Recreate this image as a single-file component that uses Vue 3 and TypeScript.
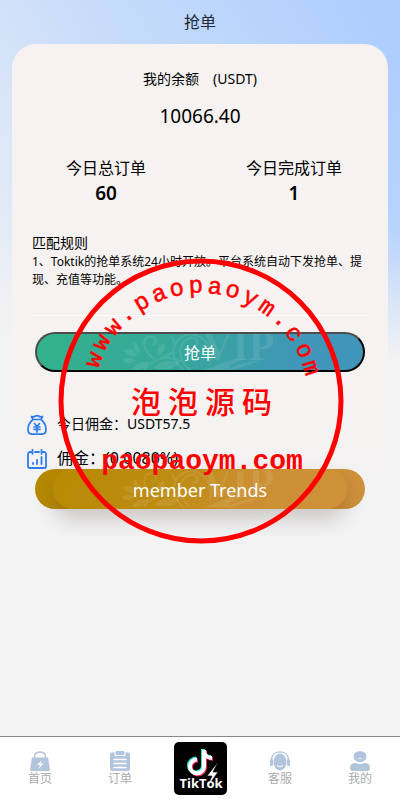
<script setup lang="ts">
interface Stat {
  label: string
  value: number
}

interface Tab {
  label: string
  icon: 'bag' | 'list' | 'logo' | 'service' | 'user'
}

const stats: Stat[] = [
  { label: '今日总订单', value: 60 },
  { label: '今日完成订单', value: 1 },
]

const tabs: Tab[] = [
  { label: '首页', icon: 'bag' },
  { label: '订单', icon: 'list' },
  { label: 'TikTok', icon: 'logo' },
  { label: '客服', icon: 'service' },
  { label: '我的', icon: 'user' },
]

// Letters of the seal stand evenly on an arc around the seal's centre.
const sealText = 'www.paopaoym.com'
const centre = 143
const radius = 108
const advance = 14
const letters = sealText.split('').map((_, i) => {
  const deg = -69 + (i * 142) / (sealText.length - 1)
  const a = (deg * Math.PI) / 180
  return {
    x: Math.round(centre + radius * Math.sin(a) - (advance / 2) * Math.cos(a)),
    y: Math.round(centre - radius * Math.cos(a) - (advance / 2) * Math.sin(a)),
    deg: Math.round(deg),
  }
})
const sealX = letters.map((l) => l.x).join(' ')
const sealY = letters.map((l) => l.y).join(' ')
const sealRotate = letters.map((l) => l.deg).join(' ')
</script>

<template>
  <div class="page">
    <svg class="defs" aria-hidden="true">
      <symbol id="ornament" viewBox="0 0 180 36">
        <g fill="none" stroke="currentColor" stroke-width="2" stroke-linecap="round">
          <path d="M24 36C32 26 46 20 60 27M34 25C26 19 20 8 28 3c7-3 11 5 5 8M40 24C53 22 59 12 52 3M63 36C48 22 52 5 68 0M70 36C56 24 58 8 70 4c8-2 10 7 4 8M68 0C84 0 94 14 90 28" />
        </g>
        <g fill="currentColor">
          <path d="M3 16c8-2 12 1 14 6-6 1-11-1-14-6zM14 8c5 3 7 8 5 12-4-2-6-7-5-12zM1 26c6-3 11-3 15 0-5 4-11 4-15 0zM12 36c3-6 9-9 17-8-2 6-9 9-17 8zM34 34c6-7 15-9 25-5-5 6-14 8-25 5zM38 21c-2-6 1-10 6-12 2 5 0 10-6 12z" />
          <path d="M84 36c14-4 22-12 44-11-12 2-17 5-20 10 10-5 20-7 32-9-13 6-23 9-30 10z" />
        </g>
        <text x="82" y="26" font-family="Liberation Serif, serif" font-size="42" font-weight="700" fill="currentColor">VIP</text>
      </symbol>
    </svg>

    <header class="title">抢单</header>

    <main class="card">
      <div class="balance-label"><span>我的余额</span><span>(USDT)</span></div>
      <div class="balance">10066.40</div>

      <section class="stats">
        <div v-for="s in stats" :key="s.label" class="stat">
          <span>{{ s.label }}</span>
          <strong>{{ s.value }}</strong>
        </div>
      </section>

      <section class="rules">
        <h2>匹配规则</h2>
        <p>1、Toktik的抢单系统24小时开放。平台系统自动下发抢单、提现、充值等功能。</p>
      </section>

      <button class="pill grab" type="button">
        <svg class="ornament" aria-hidden="true"><use href="#ornament" /></svg>
        <span class="caption">抢单</span>
      </button>

      <div class="info first">
        <svg class="info-icon" viewBox="0 0 20 20" fill="none" stroke="#2b7cf0" stroke-width="1.700" stroke-linejoin="round" stroke-linecap="round" aria-hidden="true">
          <path d="M6 4.500L4.500 1.500c2 .8 3 .3 4-.7h3c1 1 2 1.500 4 .7L14 4.500zM6 4.500C3 7 1 11 1 14.500 1 18 3 19.200 5.500 19.200h9c2.500 0 4.500-1.200 4.500-4.700C19 11 17 7 14 4.500" />
          <path d="M7.500 8.500L10 11.500l2.500-3M7 12h6M7 14.300h6M10 11.500V17" />
        </svg>
        <span class="info-text">今日佣金：USDT57.5</span>
      </div>
      <div class="info large">
        <svg class="info-icon" viewBox="0 0 20 20" fill="none" stroke="#2b7cf0" stroke-width="1.800" stroke-linejoin="round" stroke-linecap="round" aria-hidden="true">
          <path d="M4 3H3a2 2 0 0 0-2 2v12a2 2 0 0 0 2 2h14a2 2 0 0 0 2-2V5a2 2 0 0 0-2-2h-1M5.500.8v4M14.500.8v4M8 3h4M6 14v1M10 11v4M14.500 8v7" />
        </svg>
        <span class="info-text">佣金：(0.0080%)</span>
      </div>

      <button class="pill trends" type="button">
        <span class="plate"></span>
        <svg class="ornament" aria-hidden="true"><use href="#ornament" /></svg>
        <span class="caption">member Trends</span>
      </button>
    </main>

    <nav class="tabs">
      <a v-for="t in tabs" :key="t.label" href="#" class="tab" :aria-label="t.label">
        <svg v-if="t.icon === 'logo'" class="logo" viewBox="0 0 53 53" aria-hidden="true">
          <rect width="53" height="53" rx="5" fill="#000" />
          <g fill="none" stroke-width="4">
            <path d="M31 7v16.500a7 7 0 1 1-7-7M31 7c0 5 3 8 8 8" stroke="#2ee6e0" transform="translate(-2 0)" />
            <path d="M31 7v16.500a7 7 0 1 1-7-7M31 7c0 5 3 8 8 8" stroke="#f5265a" transform="translate(0 2)" />
            <path d="M31 7v16.500a7 7 0 1 1-7-7M31 7c0 5 3 8 8 8" stroke="#fff" transform="translate(-1 1)" />
          </g>
          <path d="M44 20L33 34h5l-6 13 12-17h-5z" fill="#fff" stroke="#000" stroke-width=".6" />
          <text x="27" y="46" text-anchor="middle" class="brand">TikTok</text>
        </svg>
        <template v-else>
          <svg class="tab-icon" viewBox="0 0 20 20" aria-hidden="true">
            <template v-if="t.icon === 'bag'">
              <path d="M4.500 8V5.500C4.500 2.500 7 1 10 1s5.500 1.500 5.500 4.500V8" fill="none" stroke="#b3c4dd" stroke-width="1.500" />
              <path d="M2 6.500h16L20 18.500q0 1.500-1.500 1.500h-17Q0 20 0 18.500z" fill="#b3c4dd" />
              <path d="M12 9l-5 5h3l-1.500 4 5-5.500h-3z" fill="#fff" />
            </template>
            <template v-else-if="t.icon === 'list'">
              <path d="M2 1.500h2.500V5h11V1.500H18q2 0 2 2V18q0 2-2 2H2q-2 0-2-2V3.500q0-2 2-2z" fill="#b3c4dd" />
              <rect x="5.500" width="9" height="4" rx="1" fill="#b3c4dd" />
              <path d="M3.500 8.500h13M3.500 12.500h13M3.500 16.500h13" stroke="#fff" stroke-width="1.600" />
            </template>
            <template v-else-if="t.icon === 'service'">
              <path d="M1.500 10C1 4 5 .8 10 .8s9 3.200 8.500 9.200" fill="none" stroke="#b3c4dd" stroke-width="1.300" />
              <rect y="8" width="3" height="7" rx="1.500" fill="#b3c4dd" />
              <rect x="17" y="8" width="3" height="7" rx="1.500" fill="#b3c4dd" />
              <ellipse cx="10" cy="11" rx="6.500" ry="8.500" fill="#b3c4dd" />
              <path d="M7 14.500q3 3 6 0" fill="none" stroke="#fff" />
            </template>
            <template v-else>
              <ellipse cx="10" cy="5.500" rx="6.500" ry="5.500" fill="#b3c4dd" />
              <path d="M8 7q2 2 4 0z" fill="#fff" />
              <path d="M0 17q0-5 6-5 4 2 8 0 6 0 6 5 0 3-3 3H3q-3 0-3-3z" fill="#b3c4dd" />
            </template>
          </svg>
          <span>{{ t.label }}</span>
        </template>
      </a>
    </nav>

    <svg class="seal" viewBox="0 0 286 286" aria-hidden="true">
      <circle cx="143" cy="143" r="140" fill="none" stroke="#f00" stroke-width="5" />
      <text class="seal-arc" :x="sealX" :y="sealY" :rotate="sealRotate">{{ sealText }}</text>
      <text class="seal-name" x="73 110 147 184" y="155">泡泡源码</text>
      <text class="seal-site" x="144" y="211" text-anchor="middle">paopaoym.com</text>
    </svg>
  </div>
</template>

<style>
body {
  background: #f3f3f3;
}
</style>

<style scoped>
.page {
  position: relative;
  display: flex;
  flex-direction: column;
  min-height: 100vh;
  font-family: "Noto Sans", "Noto Sans CJK SC", sans-serif;
  color: #000;
  background:
    linear-gradient(to bottom, rgba(243, 243, 243, 0) 230px, #f3f3f3 365px),
    linear-gradient(60deg, #f0f1f4, #cbdef9 42%, #abccfe) top / 100% 366px no-repeat,
    #f3f3f3;
}

.defs {
  position: absolute;
  width: 0;
  height: 0;
}

.title {
  height: 44px;
  line-height: 44px;
  font-size: 16px;
  text-align: center;
  color: #222b38;
}

.card {
  margin: 0 12px;
  padding: 24px 0 12px;
  border-radius: 24px;
  background: linear-gradient(to bottom, #f5f2f1 75%, #f3f3f3);
}

.balance-label {
  display: flex;
  justify-content: center;
  gap: 14px;
  font-size: 14px;
  line-height: 22px;
}

.balance {
  margin-top: 12px;
  font-size: 19px;
  line-height: 28px;
  text-align: center;
}

.stats {
  display: flex;
  margin-top: 26px;
}

.stat {
  flex: 1;
  display: flex;
  flex-direction: column;
  align-items: center;
  font-size: 16px;
  line-height: 25px;
}

.stat strong {
  font-size: 19px;
  font-weight: 600;
}

.rules {
  margin: 0 20px 16px;
  padding: 27px 0 26px;
  border-bottom: 1px solid #fff;
}

.rules h2 {
  margin: 0;
  font-size: 14px;
  font-weight: 400;
  line-height: 20px;
}

.rules p {
  margin: 0;
  font-size: 12px;
  line-height: 18px;
}

.pill {
  position: relative;
  display: block;
  box-sizing: border-box;
  width: calc(100% - 46px);
  height: 40px;
  margin: 0 23px;
  padding: 0;
  border: 0;
  border-radius: 20px;
  font-family: inherit;
  color: #fff;
}

.grab {
  border: 2px solid;
  border-color: #4c4c4c #000 #000 #4c4c4c;
  font-size: 16px;
  background: linear-gradient(110deg, #32b38b, #37a79c 45%, #4096b8 80%);
}

.trends {
  padding-top: 2px;
  font-size: 18px;
  background: linear-gradient(110deg, #b58900, #bd8c12 40%, #cb8f32 65%, #d0913c);
}

.plate {
  position: absolute;
  inset: 0 18px;
  border-radius: 20px;
  background: linear-gradient(110deg, #b88a04, #bd8c12 40%, #cb8f32 65%, #cf913a);
  box-shadow: 0 10px 20px rgba(60, 40, 30, 0.22);
}

.ornament {
  position: absolute;
  left: 50%;
  top: 0;
  width: 180px;
  height: 36px;
  margin-left: -80px;
  color: rgba(255, 255, 255, 0.09);
}

.trends .ornament {
  top: 2px;
}

.caption {
  position: relative;
}

.info {
  display: flex;
  align-items: center;
  gap: 10px;
  padding-left: 15px;
  height: 24px;
  font-size: 14px;
}

.info.first {
  margin-top: 41px;
}

.info.large {
  margin-top: 10px;
  margin-bottom: -2px;
  font-size: 16px;
}

.info-icon {
  width: 20px;
  height: 20px;
}

.info-text {
  padding-bottom: 4px;
}

.tabs {
  display: flex;
  height: 63px;
  margin-top: auto;
  border-top: 1px solid #888;
  background: #fff;
}

.tab {
  flex: 1;
  display: flex;
  flex-direction: column;
  align-items: center;
  justify-content: center;
  font-size: 12px;
  line-height: 16px;
  color: #aaa;
  text-decoration: none;
}

.tab-icon {
  width: 20px;
  height: 20px;
}

.logo {
  width: 53px;
  height: 53px;
}

.brand {
  font: 700 13px "Open Sans", sans-serif;
  fill: #fff;
}

.seal {
  position: absolute;
  left: 50%;
  top: 258px;
  width: 286px;
  height: 286px;
  margin-left: -142px;
  fill: #f00;
  pointer-events: none;
}

.seal-arc {
  font: 24px "Liberation Mono", monospace;
  stroke: #f00;
  stroke-width: 0.5px;
}

.seal-name {
  font: 500 30px "Noto Sans CJK SC", sans-serif;
}

.seal-site {
  font: bold 28px "Liberation Mono", monospace;
}
</style>
